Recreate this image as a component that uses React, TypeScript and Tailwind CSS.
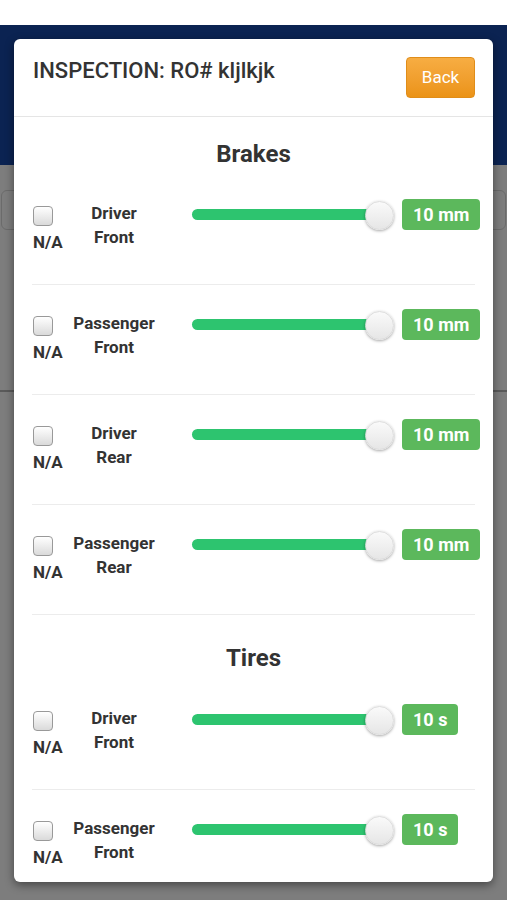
import React from "react";

type Row = { top: string; bottom: string; value: string; divider: boolean };

const brakes: Row[] = [
  { top: "Driver", bottom: "Front", value: "10 mm", divider: true },
  { top: "Passenger", bottom: "Front", value: "10 mm", divider: true },
  { top: "Driver", bottom: "Rear", value: "10 mm", divider: true },
  { top: "Passenger", bottom: "Rear", value: "10 mm", divider: true },
];

const tires: Row[] = [
  { top: "Driver", bottom: "Front", value: "10 s", divider: true },
  { top: "Passenger", bottom: "Front", value: "10 s", divider: false },
];

function InspectionRow({ row }: { row: Row }) {
  return (
    <div className="h-[110px] flex flex-col">
      <div className="flex items-start pl-[19px] pt-[24px] flex-1">
        <div className="w-[33px] flex flex-col items-start">
          <div className="mt-[7px] w-[20px] h-[20px] rounded-[4px] border border-[#999] bg-gradient-to-b from-[#ffffff] to-[#dadada]" />
          <div className="mt-[6px] text-[17px] leading-[20px] font-bold text-[#333]">N/A</div>
        </div>
        <div className="w-[96px] mt-[2px] text-center text-[17px] leading-[24px] font-bold text-[#333]">
          <div>{row.top}</div>
          <div>{row.bottom}</div>
        </div>
        <div className="ml-[30px] w-[203px] h-[31px] relative flex items-center">
          <div className="w-[188px] h-[11px] rounded-full bg-[#2dc46f]" />
          <div className="absolute right-[1px] top-[2px] w-[29px] h-[29px] rounded-full bg-gradient-to-b from-[#fafafa] to-[#e6e6e6] border border-[#dcdcdc] shadow-[0_1px_3px_rgba(0,0,0,0.35)]" />
        </div>
        <div className="ml-[7px] h-[31px] px-[11px] rounded-[4px] bg-[#5cb85c] text-white font-bold text-[18px] flex items-center">
          {row.value}
        </div>
      </div>
      {row.divider ? <div className="mx-[18px] h-px bg-[#ececec]" /> : null}
    </div>
  );
}

export default function App() {
  return (
    <div
      className="relative w-[507px] h-[900px] overflow-hidden bg-[#7d7d7d]"
      style={{ fontFamily: "Roboto, 'Noto Sans', sans-serif" }}
    >
      <div className="h-[25px] bg-white" />
      <div className="h-[140px] bg-[#0b2352]" />
      <div className="mt-[25px] mx-[1px] h-[40px] rounded-[6px] border border-[#6b6b6b]" />
      <div className="mt-[160px] h-[2px] bg-[#5a5a5a]" />

      <div className="absolute left-[14px] top-[39px] w-[479px] h-[843px] bg-white rounded-[6px] overflow-hidden shadow-[0_3px_10px_rgba(0,0,0,0.45)]">
        <div className="h-[78px] flex items-start justify-between pl-[19px] pr-[18px] pt-[18px] border-b border-[#e5e5e5]">
          <div className="text-[22px] leading-[28px] font-medium text-[#333]">INSPECTION: RO# kljlkjk</div>
          <div className="w-[69px] h-[41px] rounded-[4px] border border-[#e08d1a] bg-gradient-to-b from-[#f7ad42] to-[#eb9316] text-white text-[17px] flex items-center justify-center">
            Back
          </div>
        </div>

        <div className="h-[58px] pt-[21px] text-center text-[24px] leading-[32px] font-bold text-[#333]">Brakes</div>
        {brakes.map((r, i) => (
          <InspectionRow key={"b" + i} row={r} />
        ))}

        <div className="h-[65px] pt-[27px] text-center text-[24px] leading-[32px] font-bold text-[#333]">Tires</div>
        {tires.map((r, i) => (
          <InspectionRow key={"t" + i} row={r} />
        ))}
      </div>
    </div>
  );
}
